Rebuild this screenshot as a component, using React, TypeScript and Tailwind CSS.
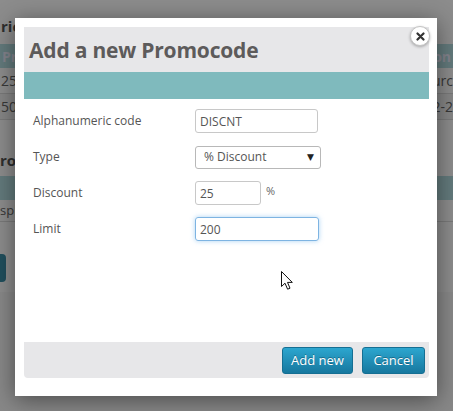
const font = { fontFamily: '"Open Sans", "DejaVu Sans", sans-serif' };

function BackgroundPage() {
  return (
    <div className="flex h-full w-full flex-col bg-white pt-[16px] text-[#666]">
      <div className="h-[28px] pl-[1px] text-[15px] font-bold leading-[20px] text-[#555]">ric</div>
      <div className="flex h-[24px] items-center justify-between bg-[#b4dfe2] px-[2px] text-[14px] font-bold text-[#eef]">
        <span>Pri</span>
        <span>tion</span>
      </div>
      <div className="flex h-[26px] items-center justify-between border-b border-[#ddd] text-[14px]">
        <span className="pl-[1px]">25</span>
        <span>urc</span>
      </div>
      <div className="flex h-[26px] items-center justify-between border-b border-[#ddd] bg-[#f4f4f4] text-[14px]">
        <span className="pl-[1px]">50</span>
        <span>2-2</span>
      </div>
      <div className="h-[24px]"></div>
      <div className="flex h-[32px] items-center text-[15px] font-bold text-[#555]">ro</div>
      <div className="h-[24px] bg-[#b4dfe2]"></div>
      <div className="flex h-[22px] items-center border-b border-[#ddd] text-[13px]">
        <span>spl</span>
      </div>
      <div className="h-[32px]"></div>
      <div className="h-[28px] w-[6px] rounded-r bg-[#3b8fa8]"></div>
      <div className="mt-[10px] flex-1 bg-[#f7f7f7]"></div>
    </div>
  );
}

function Row({ label, children }: { label: string; children: React.ReactNode }) {
  return (
    <div className="flex h-[24px] items-center">
      <div className="w-[171px] pl-[9px] text-[12px] text-[#555]">{label}</div>
      {children}
    </div>
  );
}

function Cursor() {
  return (
    <svg className="absolute left-[280px] top-[270px]" width="14" height="21" viewBox="0 0 14 21">
      <path
        d="M1.5 1.5 L1.5 16.5 L5 13.2 L7.6 19.2 L10 18.2 L7.5 12.4 L12.3 12.4 Z"
        fill="#fff"
        stroke="#111"
        strokeWidth="1"
        strokeLinejoin="round"
      />
    </svg>
  );
}

export default function App() {
  return (
    <div className="relative h-[411px] w-[453px] overflow-hidden" style={font}>
      <BackgroundPage />
      <div className="absolute inset-0 bg-black/45"></div>

      <div className="absolute left-[15px] top-[18px] flex h-[378px] w-[422px] flex-col bg-white pb-[18px] pl-[9px] pr-[8px] pt-[9px] shadow-[0_4px_22px_rgba(0,0,0,0.45)]">
        <div className="flex h-[45px] items-center bg-[#e7e7e9] pl-[5px] pt-[3px]">
          <h1 className="text-[21px] font-bold tracking-[-0.2px] text-[#5d5b5b]">Add a new Promocode</h1>
        </div>
        <div className="h-[27px] bg-[#7fbabd]"></div>

        <div className="flex flex-1 flex-col gap-[12px] pt-[10px]">
          <Row label="Alphanumeric code">
            <input
              readOnly
              value="DISCNT"
              className="h-[24px] w-[123px] rounded-[3px] border border-[#c8c8c8] px-[4px] text-[12px] text-[#555] outline-none"
            />
          </Row>
          <Row label="Type">
            <div className="flex h-[23px] w-[126px] items-center justify-between rounded-[3px] border border-[#b8b8b8] bg-white pl-[8px] pr-[6px] text-[12px] text-[#555]">
              <span>% Discount</span>
              <span className="text-[9px] text-[#222]">▼</span>
            </div>
          </Row>
          <Row label="Discount">
            <input
              readOnly
              value="25"
              className="h-[24px] w-[66px] rounded-[3px] border border-[#c8c8c8] px-[4px] text-[12px] text-[#555] outline-none"
            />
            <span className="ml-[5px] -mt-[4px] text-[11px] text-[#666]">%</span>
          </Row>
          <Row label="Limit">
            <input
              readOnly
              value="200"
              className="h-[24px] w-[124px] rounded-[3px] border border-[#7eb4e2] px-[4px] text-[12px] text-[#555] shadow-[0_0_5px_rgba(102,175,233,0.55)] outline-none"
            />
          </Row>
        </div>

        <div className="flex h-[36px] items-center justify-end gap-[9px] rounded-b-[4px] bg-[#e7e7e9] pr-[4px] pt-[1px]">
          <button className="h-[27px] w-[71px] rounded-[3px] border border-[#156f93] bg-gradient-to-b from-[#2ca6cf] to-[#17789f] text-[13px] text-white [text-shadow:0_-1px_0_rgba(0,0,0,0.3)]">
            Add new
          </button>
          <button className="h-[27px] w-[63px] rounded-[3px] border border-[#156f93] bg-gradient-to-b from-[#2ca6cf] to-[#17789f] text-[13px] text-white [text-shadow:0_-1px_0_rgba(0,0,0,0.3)]">
            Cancel
          </button>
        </div>

        <button className="absolute left-[395px] top-[8px] flex h-[20px] w-[20px] items-center justify-center rounded-full border border-[#c4c4c4] bg-white shadow-[0_1px_3px_rgba(0,0,0,0.3)]">
          <svg width="9" height="9" viewBox="0 0 9 9">
            <path d="M1.5 1.5 L7.5 7.5 M7.5 1.5 L1.5 7.5" stroke="#333" strokeWidth="2.2" strokeLinecap="round" />
          </svg>
        </button>
      </div>

      <Cursor />
    </div>
  );
}
